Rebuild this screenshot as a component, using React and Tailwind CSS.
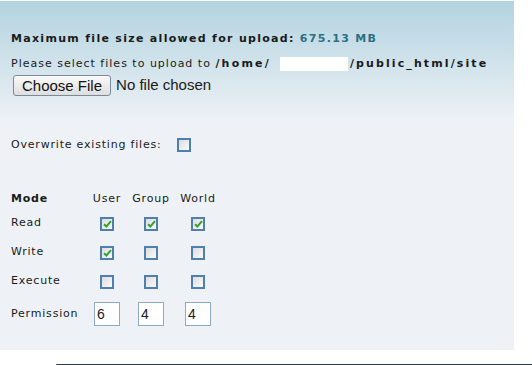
import React from 'react'

function Box({ checked }) {
  return (
    <span className="inline-flex h-[14px] w-[14px] items-center justify-center border-2 border-[#4f7fae] bg-gradient-to-br from-[#dcdcdc] to-[#fbfbfb]">
      {checked && (
        <svg width="9" height="8" viewBox="0 0 9 8">
          <path d="M1 4.2 L3.4 6.5 L8 1.2" fill="none" stroke="#2fa52f" strokeWidth="2" />
        </svg>
      )}
    </span>
  )
}

function Cell({ children, w }) {
  return <div className={`flex justify-center ${w}`}>{children}</div>
}

const rows = [
  { label: 'Read', vals: [true, true, true] },
  { label: 'Write', vals: [true, false, false] },
  { label: 'Execute', vals: [false, false, false] },
]

export default function App() {
  return (
    <div className="h-[365px] w-[532px] overflow-hidden bg-white font-['DejaVu_Sans',sans-serif] text-[11px] tracking-[0.8px] text-[#1a1a1a]">
      <div className="mt-px h-[349px] w-[514px] bg-gradient-to-b from-[#b2d3e0] via-[#eef2f6] via-35% to-[#eef2f6] pl-[11px] pt-[30px]">
        <p className="font-bold leading-[16px] tracking-[1.3px]">
          Maximum file size allowed for upload: <span className="text-[#2b7083]">675.13 MB</span>
        </p>
        <p className="mt-[9px] flex items-center leading-[16px] tracking-[1px]">
          Please select files to upload to&nbsp;<b className="tracking-[2.2px]">/home/</b>
          <span className="ml-[9px] h-[14px] w-[68px] bg-white" />
          <b className="ml-[2px] tracking-[2.1px]">/public_html/site</b>
        </p>
        <div className="ml-[2px] mt-[2px] flex items-center gap-[5px] font-['Liberation_Sans',sans-serif] text-[15px] tracking-normal">
          <button className="h-[21px] rounded-[3px] border border-[#7a8a9a] bg-gradient-to-b from-[#fafafa] to-[#dedede] px-[8px] leading-none text-[#111]">
            Choose File
          </button>
          <span>No file chosen</span>
        </div>
        <div className="mt-[40px] flex items-center gap-[15px]">
          <span>Overwrite existing files:</span>
          <Box />
        </div>
        <div className="mt-[36px]">
          <div className="flex h-[20px] items-center">
            <div className="w-[74px] font-bold">Mode</div>
            <Cell w="w-[44px]">User</Cell>
            <Cell w="w-[44px]">Group</Cell>
            <Cell w="w-[50px]">World</Cell>
          </div>
          {rows.map((r) => (
            <div key={r.label} className="flex h-[29px] items-center">
              <div className="w-[74px]">{r.label}</div>
              <Cell w="w-[44px]"><Box checked={r.vals[0]} /></Cell>
              <Cell w="w-[44px]"><Box checked={r.vals[1]} /></Cell>
              <Cell w="w-[50px]"><Box checked={r.vals[2]} /></Cell>
            </div>
          ))}
          <div className="flex h-[36px] items-center">
            <div className="w-[74px]">Permission</div>
            {['6', '4', '4'].map((v, i) => (
              <Cell key={i} w={i === 2 ? 'w-[50px]' : 'w-[44px]'}>
                <span className="flex h-[24px] w-[26px] items-center border border-[#8daac6] bg-white pl-[2px] font-['Liberation_Sans',sans-serif] text-[14px] tracking-normal">
                  {v}
                </span>
              </Cell>
            ))}
          </div>
        </div>
      </div>
      <div className="ml-[56px] mt-[14px] h-[2px] rounded-l-full bg-[#2c3b48]" />
    </div>
  )
}
